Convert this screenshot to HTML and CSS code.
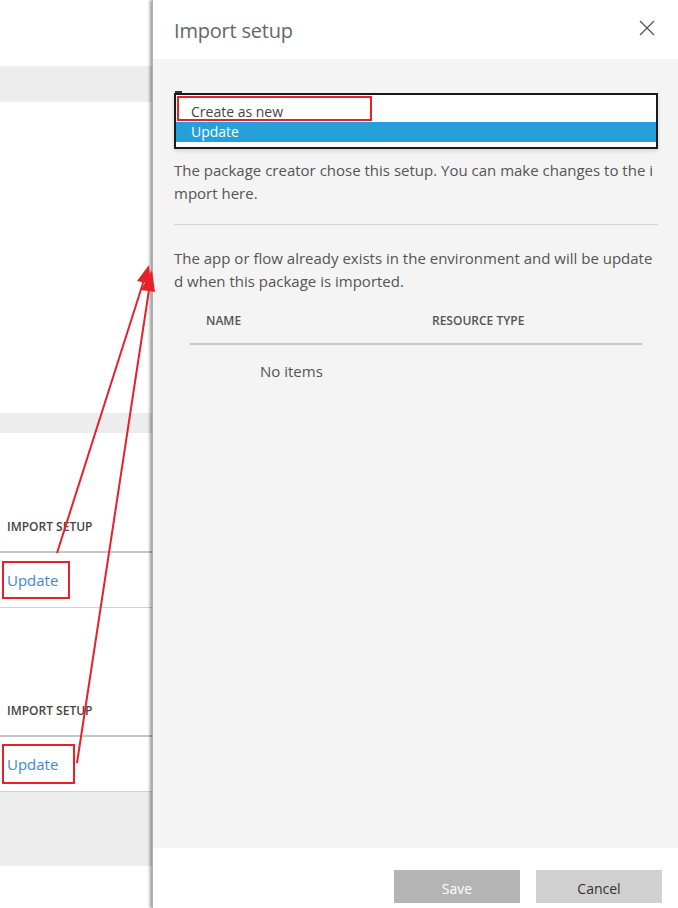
FILE: index.html
```html
<!DOCTYPE html>
<html>
<head>
<meta charset="utf-8">
<link rel="stylesheet" href="styles.css">
</head>
<body>
<div class="page">
  <div class="behind">
    <div class="band band-top"></div>
    <div class="blank blank-1"></div>
    <div class="band band-mid"></div>
    <div class="blank blank-2"></div>
    <div class="col-head">IMPORT SETUP</div>
    <div class="col-cell"><span class="link">Update</span></div>
    <div class="blank blank-3"></div>
    <div class="col-head">IMPORT SETUP</div>
    <div class="col-cell"><span class="link">Update</span></div>
    <div class="band band-bottom"></div>
  </div>
  <div class="panel">
    <div class="panel-head">
      <div class="panel-title">Import setup</div>
      <svg class="close" width="16" height="16" viewBox="0 0 16 16"><path d="M1 1L15 15M15 1L1 15" stroke="#555" stroke-width="1.3" fill="none"/></svg>
    </div>
    <div class="panel-body">
      <div class="select-wrap">
        <div class="select-list">
          <div class="opt">Create as new</div>
          <div class="opt opt-sel">Update</div>
        </div>
      </div>
      <p class="para para-1">The package creator chose this setup. You can make changes to the i<br>mport here.</p>
      <div class="divider"></div>
      <p class="para para-2">The app or flow already exists in the environment and will be update<br>d when this package is imported.</p>
      <div class="table">
        <div class="th-row">
          <div class="th">NAME</div>
          <div class="th">RESOURCE TYPE</div>
        </div>
        <div class="empty">No items</div>
      </div>
    </div>
    <div class="panel-foot">
      <button class="btn btn-save">Save</button>
      <button class="btn btn-cancel">Cancel</button>
    </div>
  </div>
  <svg class="annot" width="678" height="908" viewBox="0 0 678 908">
    <rect x="178" y="97" width="193" height="23" fill="none" stroke="#e8202a" stroke-width="2"/>
    <rect x="3" y="562" width="66" height="36" fill="none" stroke="#e8202a" stroke-width="2"/>
    <rect x="3" y="745" width="71" height="38" fill="none" stroke="#e8202a" stroke-width="2"/>
    <line x1="57" y1="553" x2="144" y2="280" stroke="#e8202a" stroke-width="2"/>
    <line x1="77" y1="763" x2="149" y2="290" stroke="#e8202a" stroke-width="2"/>
    <polygon points="149,265 137,281 151,284" fill="#e8202a"/>
    <polygon points="152,270 141,290 155,292" fill="#e8202a"/>
  </svg>
</div>
</body>
</html>
```
FILE: styles.css
```css
* { box-sizing: border-box; }
html, body { margin: 0; padding: 0; }
body {
  font-family: "Open Sans", "Noto Sans", sans-serif;
  background: #fff;
  color: #333;
}
.page {
  position: relative;
  width: 678px;
  height: 908px;
  display: grid;
  grid-template-columns: 152px 526px;
  overflow: hidden;
}
.behind {
  display: flex;
  flex-direction: column;
  background: #fff;
}
.band { background: #ededed; }
.band-top { margin-top: 66px; height: 36px; }
.blank-1 { height: 311px; }
.band-mid { height: 20px; }
.blank-2 { height: 72px; }
.blank-3 { height: 81px; }
.band-bottom { height: 74px; }
.col-head {
  height: 48px;
  padding: 0 0 16px 7px;
  font-size: 12px;
  line-height: 16px;
  font-weight: 600;
  color: #444;
  display: flex;
  align-items: flex-end;
  border-bottom: 2px solid #c6c6c6;
}
.col-cell {
  height: 55px;
  padding-left: 7px;
  display: flex;
  align-items: center;
  border-bottom: 1px solid #d2d2d2;
}
.link {
  font-size: 15px;
  color: #4289ca;
}
.panel {
  display: flex;
  flex-direction: column;
  background: #fff;
  box-shadow: -2px 0 3px rgba(0,0,0,0.4);
  border-left: 1px solid #b0b0b0;
  z-index: 1;
}
.panel-head {
  height: 59px;
  display: flex;
  align-items: center;
  justify-content: space-between;
  padding: 0 23px 0 21px;
}
.panel-title {
  font-size: 20px;
  color: #666;
  font-weight: 400;
  margin-top: 2px;
  letter-spacing: -0.2px;
}
.close { margin-top: -4px; }
.panel-body {
  flex: 1;
  background: #f4f4f4;
  padding: 34px 20px 0 21px;
}
.select-wrap {
  position: relative;
}
.select-wrap::before {
  content: "";
  position: absolute;
  left: 1px;
  top: -2px;
  width: 7px;
  height: 2px;
  background: #333;
}
.select-list {
  border: 2px solid #1b1b1b;
  background: #fff;
  padding: 6px 0 5px;
  box-shadow: 0 2px 4px rgba(0,0,0,0.12);
}
.opt {
  height: 21px;
  padding-left: 15px;
  font-size: 14px;
  line-height: 21px;
  color: #444;
}
.opt-sel {
  height: 20px;
  line-height: 20px;
  background: #26a0da;
  color: #fff;
}
.para {
  margin: 0;
  font-size: 15px;
  line-height: 23px;
  color: #555;
  white-space: nowrap;
}
.para-1 { margin-top: 10px; }
.divider {
  height: 1px;
  background: #d4d4d4;
  margin-top: 19px;
}
.para-2 { margin-top: 22px; }
.table {
  margin: 2px 16px 0;
}
.th-row {
  display: grid;
  grid-template-columns: 1fr 1fr;
  height: 50px;
  padding-top: 2px;
  align-items: center;
  border-bottom: 2px solid #c8c8c8;
}
.th {
  padding-left: 16px;
  font-size: 12px;
  font-weight: 600;
  color: #555;
}
.empty {
  padding: 16px 0 0 70px;
  font-size: 15px;
  color: #555;
}
.panel-foot {
  height: 60px;
  display: flex;
  justify-content: flex-end;
  gap: 16px;
  padding: 22px 16px 0 0;
  background: #fff;
}
.btn {
  width: 126px;
  height: 33px;
  border: none;
  padding: 3px 0 0;
  font-family: "Open Sans", "Noto Sans", sans-serif;
  font-size: 14px;
}
.btn-save { background: #b4b4b4; color: #fff; }
.btn-cancel { background: #d0d0d0; color: #333; }
.annot {
  position: absolute;
  left: 0;
  top: 0;
  z-index: 2;
  pointer-events: none;
}
```
